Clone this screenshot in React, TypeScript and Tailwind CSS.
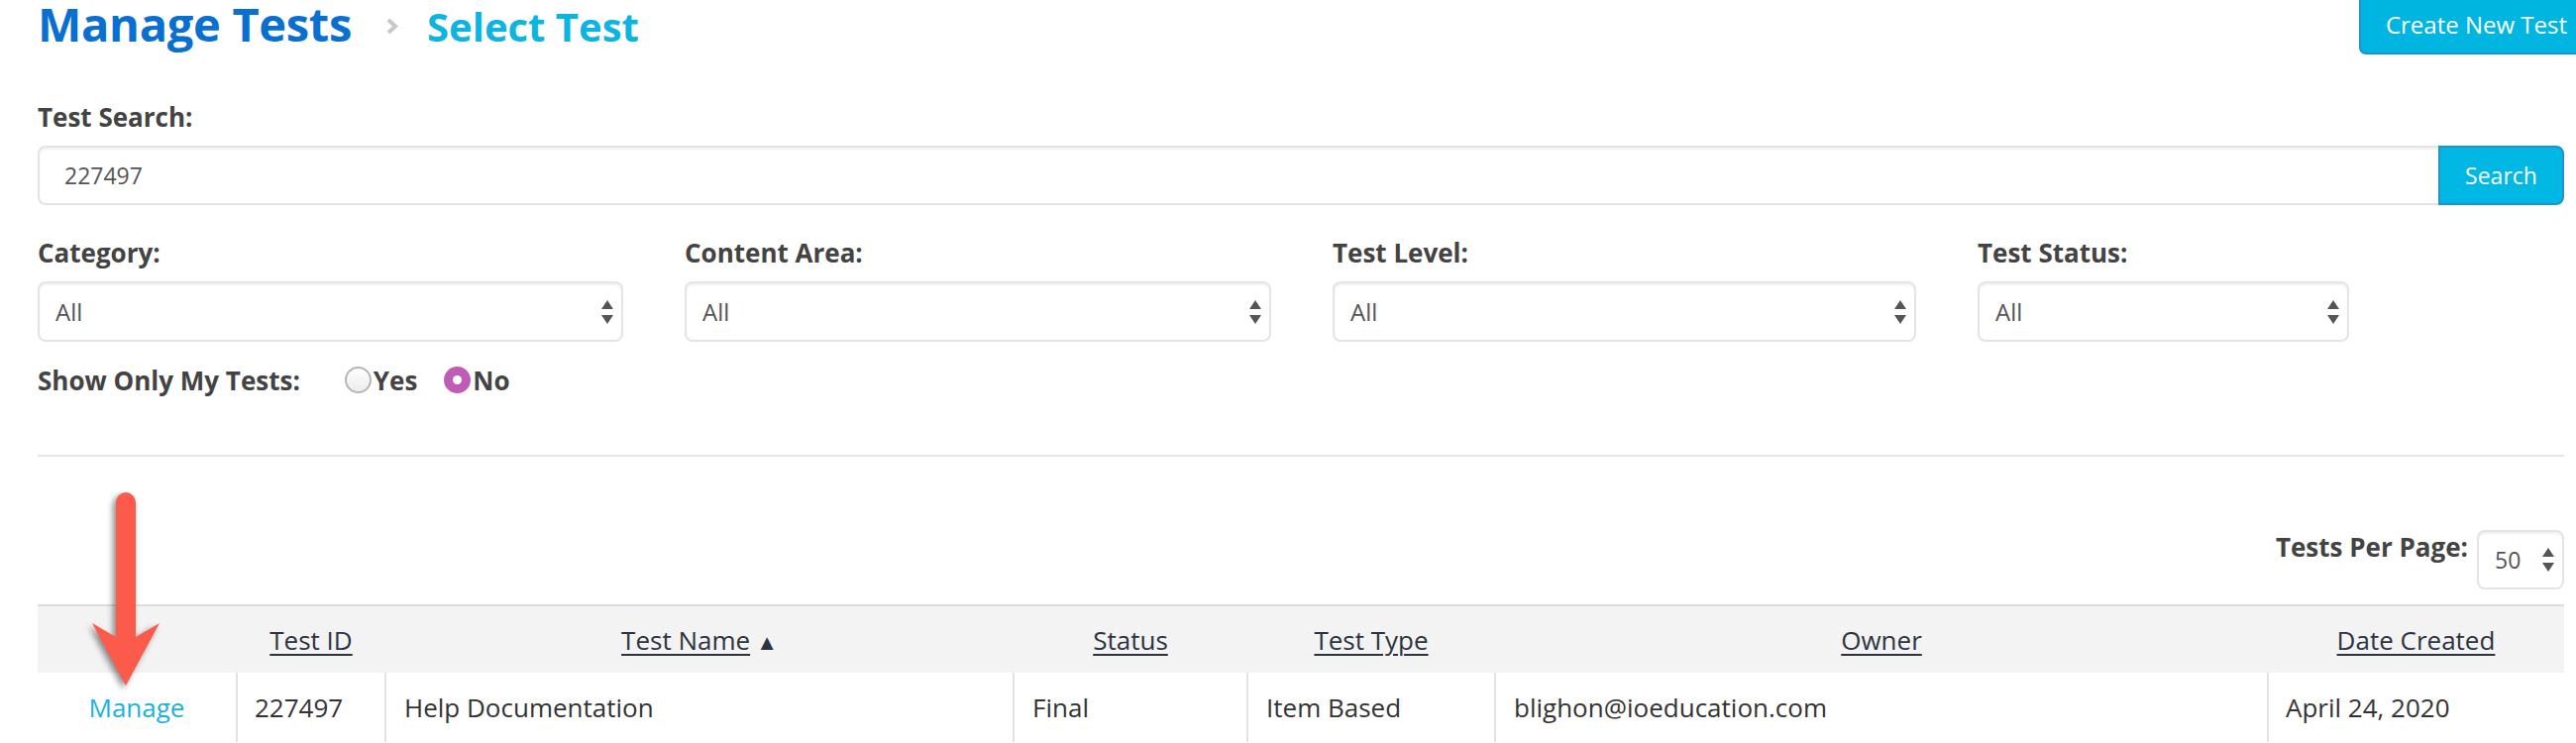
import React from "react";

const SortArrows = () => (
  <svg width="12" height="24" viewBox="0 0 12 24" className="shrink-0">
    <polygon points="6,0 12,9 0,9" fill="#555" />
    <polygon points="0,15 12,15 6,24" fill="#555" />
  </svg>
);

const SelectBox = ({ value, className = "" }: { value: string; className?: string }) => (
  <div
    className={`flex h-[61px] items-center justify-between rounded-[8px] border-2 border-[#e4e4e4] bg-white pl-[16px] pr-[8px] shadow-[inset_0_2px_2px_rgba(0,0,0,0.06)] ${className}`}
  >
    <span className="text-[24px] text-[#555]">{value}</span>
    <SortArrows />
  </div>
);

const Radio = ({ checked }: { checked?: boolean }) =>
  checked ? (
    <span className="flex h-[27px] w-[27px] items-center justify-center rounded-full bg-[#bf5cb6]">
      <span className="h-[9px] w-[9px] rounded-full bg-white" />
    </span>
  ) : (
    <span className="h-[27px] w-[27px] rounded-full border-2 border-[#b5b5b5] bg-gradient-to-b from-white to-[#ececec]" />
  );

const filters = [
  { label: "Category:", value: "All" },
  { label: "Content Area:", value: "All" },
  { label: "Test Level:", value: "All" },
  { label: "Test Status:", value: "All" },
];

const columns = [
  { header: "", width: 201 },
  { header: "Test ID", width: 150 },
  { header: "Test Name", width: 634, sorted: true },
  { header: "Status", width: 236 },
  { header: "Test Type", width: 250 },
  { header: "Owner", width: 780 },
  { header: "Date Created", width: 299 },
];

const rows = [
  {
    id: "227497",
    name: "Help Documentation",
    status: "Final",
    type: "Item Based",
    owner: "blighon@ioeducation.com",
    created: "April 24, 2020",
  },
];

const App = () => {
  return (
    <div className="relative h-[750px] w-[2600px] overflow-hidden bg-white pl-[38px] pr-[12px] font-['Open_Sans',sans-serif] text-[#434343]">
      {/* Heading */}
      <div className="flex h-[55px] items-start justify-between">
        <div className="mt-[1px] flex items-baseline">
          <h1 className="text-[47px] font-bold leading-none tracking-[-0.3px] text-[#0a70d0]">Manage Tests</h1>
          <svg width="14" height="17" viewBox="0 0 14 17" className="ml-[34px] mr-[28px] mt-[17px] self-start">
            <polyline points="3,2 10,8.5 3,15" fill="none" stroke="#c8c8c8" strokeWidth="4" />
          </svg>
          <span className="text-[40px] font-bold leading-none text-[#0cb4e2]">Select Test</span>
        </div>
        <button className="-mr-[30px] -mt-[6px] h-[61px] rounded-[7px] border-2 border-[#1d93d3] bg-[#00b6e1] px-[25px] text-[24px] text-white">
          Create New Test
        </button>
      </div>

      {/* Search */}
      <div className="mt-[50px] text-[26px] font-bold leading-none">Test Search:</div>
      <div className="mt-[16px] flex h-[60px]">
        <div className="flex flex-1 items-center rounded-l-[8px] border-2 border-r-0 border-[#e4e4e4] pl-[25px] shadow-[inset_0_2px_2px_rgba(0,0,0,0.06)]">
          <span className="text-[23px] text-[#555]">227497</span>
        </div>
        <button className="w-[127px] rounded-r-[8px] border-2 border-[#1d93d3] bg-[#00b8e3] text-[23px] text-white">
          Search
        </button>
      </div>

      {/* Filters */}
      <div className="mt-[35px] grid grid-cols-[591px_592px_589px_375px] gap-x-[62px]">
        {filters.map((f) => (
          <div key={f.label}>
            <div className="text-[26px] font-bold leading-none">{f.label}</div>
            <SelectBox value={f.value} className="mt-[16px]" />
          </div>
        ))}
      </div>

      {/* Show only mine */}
      <div className="mt-[25px] flex items-center text-[26px] font-bold leading-none">
        <span>Show Only My Tests:</span>
        <span className="ml-[45px] flex items-center gap-[2px]">
          <Radio />
          <span>Yes</span>
        </span>
        <span className="ml-[27px] flex items-center gap-[2px]">
          <Radio checked />
          <span>No</span>
        </span>
      </div>

      <div className="mt-[62px] h-[2px] bg-[#e6e6e6]" />

      {/* Per page */}
      <div className="mt-[74px] flex items-start justify-end">
        <span className="mr-[9px] mt-[4px] text-[26px] font-bold leading-none">Tests Per Page:</span>
        <SelectBox value="50" className="!h-[60px] w-[88px] !pl-[16px] [&>span]:!text-[23px]" />
      </div>

      {/* Table */}
      <table className="mt-[15px] w-full table-fixed border-collapse">
        <colgroup>
          {columns.map((c, i) => (
            <col key={i} style={{ width: c.width }} />
          ))}
        </colgroup>
        <thead>
          <tr className="border-t-2 border-[#dcdcdc] bg-[#f3f3f3]">
            {columns.map((c, i) => (
              <th key={i} className="h-[68px] text-center text-[26px] font-normal leading-none text-[#2d3340]">
                {c.header && (
                  <span className="underline decoration-2 underline-offset-[4px]">{c.header}</span>
                )}
                {c.sorted && <span className="ml-[6px] text-[22px]">▲</span>}
              </th>
            ))}
          </tr>
        </thead>
        <tbody>
          {rows.map((r) => (
            <tr key={r.id} className="text-[26px] leading-none text-[#333]">
              <td className="h-[70px] border-r-2 border-[#e2e2e2] text-center text-[#1ab2de]">Manage</td>
              <td className="border-r-2 border-[#e2e2e2] pl-[17px]">{r.id}</td>
              <td className="border-r-2 border-[#e2e2e2] pl-[18px]">{r.name}</td>
              <td className="border-r-2 border-[#e2e2e2] pl-[18px]">{r.status}</td>
              <td className="border-r-2 border-[#e2e2e2] pl-[18px]">{r.type}</td>
              <td className="border-r-2 border-[#e2e2e2] pl-[18px]">{r.owner}</td>
              <td className="pl-[17px]">{r.created}</td>
            </tr>
          ))}
        </tbody>
      </table>

      {/* Annotation arrow */}
      <svg
        width="90"
        height="210"
        viewBox="0 0 90 210"
        className="absolute left-[85px] top-[490px] drop-shadow-[-3px_3px_3px_rgba(0,0,0,0.45)]"
      >
        <path d="M32,17 A10,10 0 0 1 52,17 L52,153 L76,139 L42,202 L8,139 L32,153 Z" fill="#fc5a4b" />
      </svg>
    </div>
  );
};

export default App;
